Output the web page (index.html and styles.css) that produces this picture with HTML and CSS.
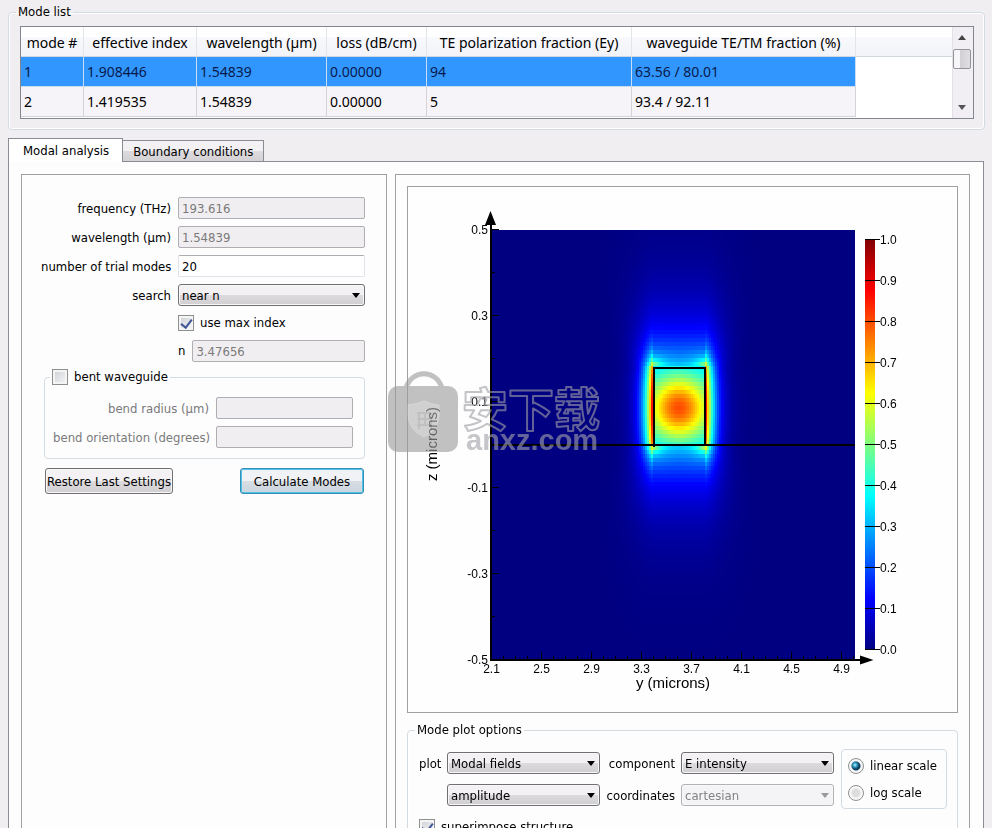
FILE: index.html
```html
<!DOCTYPE html>
<html lang="en">
<head>
<meta charset="utf-8">
<title>Mode list</title>
<link rel="stylesheet" href="styles.css">
</head>
<body>
<fieldset class="group mode-list">
  <legend>Mode list</legend>
  <div class="list-view">
    <div class="list-scroll">
      <table class="modes">
        <colgroup><col class="c-mode"><col class="c-index"><col class="c-wave"><col class="c-loss"><col class="c-te"><col class="c-tetm"><col></colgroup>
        <thead>
          <tr><th>mode #</th><th>effective index</th><th>wavelength (µm)</th><th>loss (dB/cm)</th><th>TE polarization fraction (Ey)</th><th>waveguide TE/TM fraction (%)</th><th></th></tr>
        </thead>
        <tbody>
          <tr class="selected"><td>1</td><td>1.908446</td><td>1.54839</td><td>0.00000</td><td>94</td><td>63.56 / 80.01</td><td class="rest"></td></tr>
          <tr><td>2</td><td>1.419535</td><td>1.54839</td><td>0.00000</td><td>5</td><td>93.4 / 92.11</td><td class="rest"></td></tr>
        </tbody>
      </table>
    </div>
    <div class="scrollbar"><span class="arrow up"></span><span class="thumb"></span><span class="arrow down"></span></div>
  </div>
</fieldset>

<nav class="tabs">
  <button class="tab active" type="button">Modal analysis</button>
  <button class="tab" type="button">Boundary conditions</button>
</nav>

<main class="pane">
  <form class="panel settings">
    <div class="form-grid">
      <label for="freq">frequency (THz)</label><input class="field" id="freq" type="text" value="193.616" disabled>
      <label for="wave">wavelength (µm)</label><input class="field" id="wave" type="text" value="1.54839" disabled>
      <label for="trial">number of trial modes</label><input class="field" id="trial" type="text" value="20">
      <label for="search">search</label><span class="combo"><select id="search"><option>near n</option></select></span>
    </div>
    <div class="index-block">
      <label class="check"><input type="checkbox" checked>use max index</label>
      <div class="n-row"><label for="n">n</label><input class="field" id="n" type="text" value="3.47656" disabled></div>
    </div>
    <fieldset class="group bent">
      <legend><label class="check"><input type="checkbox">bent waveguide</label></legend>
      <div class="bent-grid">
        <label for="radius">bend radius (µm)</label><input class="field" id="radius" type="text" disabled>
        <label for="orient">bend orientation (degrees)</label><input class="field" id="orient" type="text" disabled>
      </div>
    </fieldset>
    <div class="actions">
      <button class="btn" type="button">Restore Last Settings</button>
      <button class="btn primary" type="button">Calculate Modes</button>
    </div>
  </form>

  <section class="panel results">
    <div class="plot">
      <canvas id="field" width="549" height="525"></canvas>
      <svg id="axes" viewBox="408 187 549 525" role="img" aria-label="E intensity">
        <defs>
          <linearGradient id="jet" x1="0" y1="1" x2="0" y2="0">
            <stop offset="0" stop-color="#000080"/><stop offset=".125" stop-color="#00f"/><stop offset=".375" stop-color="#0ff"/>
            <stop offset=".625" stop-color="#ff0"/><stop offset=".875" stop-color="#f00"/><stop offset="1" stop-color="#800000"/>
          </linearGradient>
        </defs>
        <rect x="865" y="239" width="10" height="411" fill="url(#jet)"/>
        <g class="ink">
          <path d="M654 367V447M705 367V446M653 368H706" stroke-width="2"/>
          <path d="M491 445H855" stroke-width="2"/>
          <path d="M491 222V660M490 660H862" stroke-width="2"/>
          <path class="solid" d="M490.500 211L496 225H485ZM873.500 660L860 655.500V664.500Z"/>
          <path id="ticks" stroke-width="1"/>
        </g>
        <g id="labels"></g>
        <text x="673" y="688" class="axis">y (microns)</text>
        <text transform="translate(437 444) rotate(-90)" class="axis">z (microns)</text>
      </svg>
    </div>

    <fieldset class="group options">
      <legend>Mode plot options</legend>
      <div class="option-row">
        <div class="option-grid">
          <label for="plot">plot</label><span class="combo"><select id="plot"><option>Modal fields</option></select></span>
          <label for="comp">component</label><span class="combo"><select id="comp"><option>E intensity</option></select></span>
          <span class="combo second"><select id="quantity" aria-label="quantity"><option>amplitude</option></select></span>
          <label for="coord">coordinates</label><span class="combo off"><select id="coord" disabled><option>cartesian</option></select></span>
        </div>
        <div class="scale-box">
          <label class="radio"><input type="radio" name="scale" checked>linear scale</label>
          <label class="radio"><input type="radio" name="scale">log scale</label>
        </div>
      </div>
      <label class="check"><input type="checkbox" checked>superimpose structure</label>
    </fieldset>

    <svg class="watermark" viewBox="0 0 216 84" aria-hidden="true">
      <path class="bag-handle" d="M18 16C24-3 48-3 54 16"/>
      <rect class="bag" y="14" width="70" height="66" rx="10"/>
      <path class="shield" d="M20 33Q30 32 36 29Q42 32 51 33V44Q50 58 36 65Q21 58 20 44Z"/>
      <path class="bag-mark" d="M29 41H43M29 47H43M29 53H43M31 41V57M37 41V53M43 41V57"/>
      <text x="74" y="54" class="cjk">安下载</text>
      <text x="78" y="78" class="site">anxz.com</text>
    </svg>
  </section>
</main>
<script src="plot.js"></script>
</body>
</html>
```
FILE: styles.css
```css
* { box-sizing: border-box; }

body {
  margin: 0;
  height: 100vh;
  padding: 4px 7px 0 8px;
  overflow: hidden;
  display: flex;
  flex-direction: column;
  background: #f0eef1;
  color: #000;
  font: 13px/16px "DejaVu Sans Condensed", "Noto Sans", sans-serif;
}

button, input, select { font: inherit; color: inherit; margin: 0; }

.group {
  min-width: 0;
  margin: 0;
  border: 1px solid #d3dbe2;
  border-radius: 4px;
  box-shadow: inset 0 0 0 1px #fff;
}
.group > legend { padding: 0 2px; }

/* Mode list */
.mode-list { padding: 6px 10px 10px 11px; }
.mode-list > legend { margin-left: -4px; }
.list-view { display: flex; border: 1px solid #82868e; background: #fff; }
.list-scroll { flex: 1; min-width: 0; overflow: hidden; height: 91px; }
.modes {
  width: 100%;
  table-layout: fixed;
  border-collapse: separate;
  border-spacing: 0;
  font: 14px/20px "Noto Sans", sans-serif;
}
.c-mode { width: 63px; }
.c-index { width: 113px; }
.c-wave { width: 130px; }
.c-loss { width: 100px; }
.c-te { width: 205px; }
.c-tetm { width: 224px; }
.modes th {
  height: 30px;
  padding: 2px 0 0;
  font-weight: 400;
  white-space: nowrap;
  background: linear-gradient(#fff 35%, #f8f9fc 36%, #f2f3f8);
  border-right: 1px solid #e3e5eb;
  border-bottom: 1px solid #d0d8de;
}
.modes th:last-child { border-right: 0; }
.modes td {
  height: 30px;
  padding: 0 3px;
  background: #f6f4f8;
  border-right: 1px solid #d5d3d7;
  border-bottom: 1px solid #d5d3d7;
}
.modes .selected td { background: #3296ff; color: #061a4c; border-color: #c9dcf2; }
.modes td.rest, .modes .selected td.rest { background: #fff; border: 0; }

.scrollbar {
  width: 21px;
  display: flex;
  flex-direction: column;
  align-items: center;
  background: #f1eff3;
  border-left: 1px solid #e3e1e5;
  padding: 8px 2px 8px 0;
}
.arrow { border: 4px solid transparent; }
.arrow.up { border-top: 0; border-bottom: 5px solid #444; }
.arrow.down { border-bottom: 0; border-top: 5px solid #555; margin-top: auto; }
.thumb {
  width: 18px;
  height: 20px;
  margin-top: 9px;
  border: 1px solid #939398;
  border-radius: 2px;
  background: linear-gradient(90deg, #f6f5f7 35%, #d2d0d5 40%, #e0dee2);
}

/* Tabs */
.tabs { display: flex; align-items: flex-end; margin-top: 8px; }
.tab {
  height: 21px;
  padding: 2px 10px 0;
  border: 1px solid #898c95;
  border-left: 0;
  border-bottom: 0;
  background: linear-gradient(#f3f1f4 50%, #dddbde 50%, #d3d1d4);
}
.tab.active {
  height: 24px;
  padding: 0 13px 0 14px;
  margin-bottom: -1px;
  border-left: 1px solid #898c95;
  background: #fff;
  position: relative;
}

.pane {
  flex: 1 0 auto;
  display: grid;
  grid-template-columns: 366px minmax(0, 1fr);
  gap: 8px;
  margin-right: 1px;
  padding: 12px 13px 0 12px;
  border: 1px solid #898c95;
  border-bottom: 0;
  background: #fdfdfe;
}
.panel { border: 1px solid #a0a0a4; border-bottom: 0; }

/* Controls */
.field {
  width: 100%;
  min-width: 0;
  height: 22px;
  padding: 1px 4px 0 3px;
  border: 1px solid #dfe4ea;
  border-top-color: #abadb3;
  border-radius: 2px;
  background: #fff;
}
.field:disabled { border-color: #b0aeb2; background: #f0eef1; color: #7a7a7a; }

.combo { position: relative; display: block; }
.combo::after {
  content: "";
  position: absolute;
  right: 5px;
  top: 9px;
  border: 4px solid transparent;
  border-top: 5px solid #000;
  border-bottom: 0;
  pointer-events: none;
}
.combo select {
  display: block;
  width: 100%;
  height: 22px;
  padding: 1px 3px 0;
  appearance: none;
  border: 1px solid #707070;
  border-radius: 3px;
  background: linear-gradient(#f3f1f4 50%, #dddbde 50%, #d0ced1);
  box-shadow: inset 0 0 0 1px #f8f7f9;
}
.combo.off::after { border-top-color: #9a9a9a; }
.combo.off select { border-color: #b3b1b5; background: #f4f3f5; color: #838383; opacity: 1; }

.check, .radio { display: flex; align-items: center; gap: 6px; }
.check input {
  appearance: none;
  width: 16px;
  height: 16px;
  border: 1px solid #8e8f8f;
  background: linear-gradient(135deg, #cdd0d6, #f6f6f7);
  box-shadow: inset 0 0 0 2px #f4f4f4;
  display: grid;
  place-items: center;
}
.check input:checked::after {
  content: "";
  width: 5px;
  height: 9px;
  margin-bottom: 2px;
  border: solid #3f5596;
  border-width: 0 2px 2px 0;
  transform: rotate(38deg);
}
.radio input {
  appearance: none;
  width: 16px;
  height: 16px;
  border: 1px solid #8e8f8f;
  border-radius: 50%;
  background: radial-gradient(circle, #dddde0 4px, #f7f7f8 5px);
}
.radio input:checked {
  background: radial-gradient(circle at 6px 6px, #bff0ff 0, #2fa0c8 2px, transparent 4px), radial-gradient(circle, #123f5e 4px, #f4f6f8 5px);
}

/* Settings */
.settings { padding: 22px 21px 0 19px; }
.form-grid {
  display: grid;
  grid-template-columns: 130px minmax(0, 1fr);
  gap: 7px;
  align-items: center;
}
.form-grid label, .bent-grid label, .option-grid label { padding-top: 2px; text-align: right; white-space: nowrap; }
.index-block { margin: 9px 0 0 137px; }
.n-row { display: flex; align-items: center; gap: 7px; margin-top: 9px; }
.bent { margin: 7px 0 0 3px; padding: 12px 11px 10px 8px; }
.bent > legend { margin-left: -3px; }
.bent-grid {
  display: grid;
  grid-template-columns: minmax(0, 1fr) 137px;
  gap: 7px;
  align-items: center;
  color: #7a7a7a;
}
.actions { display: flex; justify-content: space-between; margin: 9px 1px 0 4px; }
.btn {
  width: 128px;
  height: 26px;
  padding: 1px 0 0;
  white-space: nowrap;
  border: 1px solid #707070;
  border-radius: 3px;
  background: linear-gradient(#f3f1f4 50%, #dddbde 50%, #d0ced1);
  box-shadow: inset 0 0 0 1px #f8f7f9;
}
.btn.primary {
  width: 124px;
  border-color: #3c8db5;
  background: linear-gradient(#f0f2f5 50%, #d7dde3 50%, #ccd6de);
  box-shadow: inset 0 0 0 1px #4cc4ea;
}

/* Results */
.results { position: relative; padding: 11px; }
.plot { display: grid; border: 1px solid #a0a0a4; background: #fefefe; }
.plot canvas, .plot svg { grid-area: 1 / 1; display: block; width: 100%; height: auto; }
.plot text { font-family: "Liberation Sans", Arial, sans-serif; font-size: 12px; text-anchor: middle; }
.plot text.end { text-anchor: end; }
.plot text.start { text-anchor: start; }
.plot text.axis { font-size: 15px; }
.ink { fill: none; stroke: #000; }
.ink .solid { fill: #000; stroke: none; }

.options { margin-top: 9px; padding: 14px 10px 10px 11px; }
.options > legend { margin-left: -4px; }
.option-row { display: flex; gap: 7px; align-items: flex-start; margin-bottom: 10px; }
.option-grid {
  flex: 1;
  display: grid;
  grid-template-columns: 22px minmax(0, 1fr) 69px minmax(0, 1fr);
  gap: 10px 6px;
  align-items: center;
}
.option-grid .second { grid-column: 2; }
.scale-box {
  width: 106px;
  height: 60px;
  margin-top: -3px;
  padding: 8px 6px 7px;
  display: flex;
  flex-direction: column;
  justify-content: space-between;
  border: 1px solid #d3dbe2;
  border-radius: 4px;
  white-space: nowrap;
}

.watermark {
  position: absolute;
  left: -8px;
  top: 197px;
  width: 216px;
  height: 84px;
  overflow: visible;
  opacity: 0.62;
  pointer-events: none;
}
.bag { fill: #9c9c9c; }
.bag-handle { fill: none; stroke: #9c9c9c; stroke-width: 5; }
.shield { fill: #b4b4b4; stroke: #bdbdbd; stroke-width: 1; }
.bag-mark { fill: none; stroke: #9a9a9a; stroke-width: 2; }
.cjk { font: 700 46px "Noto Sans CJK SC", sans-serif; fill: none; stroke: #9f9fa6; stroke-width: 2; stroke-linejoin: round; }
.site { font: 700 29px "Liberation Sans", sans-serif; fill: #a2a2aa; }
```
FILE: plot.js
```js
const ctx = document.getElementById("field").getContext("2d");
const X0 = 83, Y0 = 43, W = 364, H = 430;
const core = { l: 245, r: 297, t: 181, b: 258 };

function jet(v) {
  const c = k => Math.round(255 * Math.max(0, Math.min(1, 1.5 - Math.abs(4 * v - k))));
  return `rgb(${c(3)},${c(2)},${c(1)})`;
}

// Evanescent field beside the core, at distance dx from its wall
function side(dx, w) {
  const body = 0.58 * Math.exp(-Math.pow(dx / 11, 1.4)) + 0.07 * Math.exp(-dx / 18);
  return body * (1 - 0.22 * w * w) + 0.32 * Math.exp(-dx / 3);
}

// Field intensity of the fundamental mode, 0 to 1
function intensity(x, y) {
  const dx = Math.max(core.l - x, x - core.r, 0);
  const dy = Math.max(core.t - y, y - core.b, 0);
  const u = (x - 271) / 26, w = (y - 221) / 39;
  if (!dx && !dy) return 0.38 + 0.42 * Math.exp(-0.8 * u * u - 1.5 * w * w) - 0.06 * w * w;
  if (!dy) return side(dx, w);
  const halo = 0.34 * Math.exp(-dy / 40) * Math.exp(-Math.pow(dx / (14 + dy / 8), 1.4));
  if (dx) {
    const k = Math.exp(-dy / 9);
    return halo * (1 - k) + side(dx, 1) * k;
  }
  const wall = Math.min(x - core.l, core.r - x);
  return halo + 0.36 * Math.exp(-Math.hypot(wall, dy) / 6);
}

const cw = 2, ch = 4;
for (let y = 0; y < H; y += ch) {
  for (let x = 0; x < W; x += cw) {
    ctx.fillStyle = jet(intensity(X0 + x + cw / 2, Y0 + y + ch / 2));
    ctx.fillRect(X0 + x, Y0 + y, Math.min(cw, W - x), Math.min(ch, H - y));
  }
}

const labels = document.getElementById("labels");
let ticks = "";
function label(x, y, text, cls) {
  const t = document.createElementNS("http://www.w3.org/2000/svg", "text");
  t.setAttribute("x", x);
  t.setAttribute("y", y);
  if (cls) t.setAttribute("class", cls);
  t.textContent = text;
  labels.append(t);
}
for (let i = 0; i <= 10; i++) {
  const y = Math.round(649 - i * 41) + 0.5;
  ticks += `M865 ${y}H880`;
  label(880, y + 4, (i / 10).toFixed(1), "start");
}
["0.5", "0.3", "0.1", "-0.1", "-0.3", "-0.5"].forEach((s, i) => {
  const y = 229.5 + i * 86;
  ticks += `M491 ${y}H499`;
  if (i < 5) ticks += `M491 ${y + 43}H495`;
  label(488, y + 4, s, "end");
});
["2.1", "2.5", "2.9", "3.3", "3.7", "4.1", "4.5", "4.9"].forEach((s, i) => {
  const x = 491.5 + i * 50;
  ticks += `M${x} 660V652`;
  for (let k = 1; k < 4 && x + k * 12 < 855; k++) ticks += `M${x + k * 12} 660V656`;
  label(x, 673, s);
});
document.getElementById("ticks").setAttribute("d", ticks);
```
